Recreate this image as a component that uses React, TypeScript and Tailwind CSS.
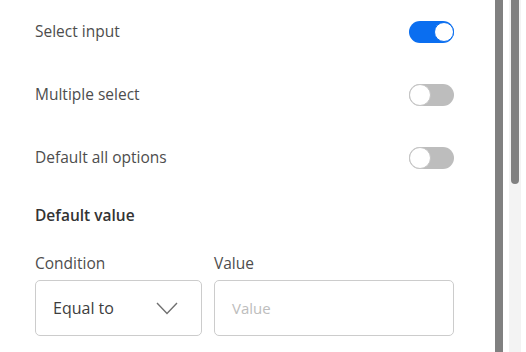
import React from "react";

const Toggle = ({ on }: { on: boolean }) => (
  <div
    className={
      on
        ? "w-[45px] h-[22px] rounded-full bg-[#0a6ef0] flex items-center justify-end px-[2px]"
        : "w-[45px] h-[22px] rounded-full bg-[#bdbdbd] flex items-center justify-start"
    }
  >
    <div
      className={
        on
          ? "w-[20px] h-[20px] rounded-full bg-white border-[1.5px] border-[#0a6ef0] -mr-[2px]"
          : "w-[22px] h-[22px] rounded-full bg-white border-[1.5px] border-[#c4c4c4]"
      }
    />
  </div>
);

const Row = ({ label, on }: { label: string; on: boolean }) => (
  <div className="flex items-center justify-between h-[22px]">
    <span className="text-[15.5px] text-[#4d4d4d]">{label}</span>
    <Toggle on={on} />
  </div>
);

export default function App() {
  return (
    <div
      className="w-[526px] h-[352px] flex bg-white overflow-hidden"
      style={{ fontFamily: '"Open Sans", "Noto Sans", sans-serif' }}
    >
      <div className="w-[495px] pl-[35px] pr-[41px] pt-[21px] flex flex-col">
        <div className="flex flex-col gap-[41px]">
          <Row label="Select input" on={true} />
          <Row label="Multiple select" on={false} />
          <Row label="Default all options" on={false} />
        </div>
        <div className="mt-[35px] text-[15.5px] leading-[22px] font-semibold text-[#333]">Default value</div>
        <div className="mt-[26px] flex gap-[12px]">
          <div className="flex flex-col w-[167px]">
            <span className="text-[15.5px] text-[#4d4d4d] leading-[22px]">Condition</span>
            <div className="mt-[6px] h-[56px] border border-[#cccccc] rounded-[5px] flex items-center justify-between pl-[17px] pr-[23px]">
              <span className="text-[16px] text-[#3d3d3d]">Equal to</span>
              <svg width="22" height="13" viewBox="0 0 22 13" fill="none">
                <path d="M1 1L11 11.5L21 1" stroke="#707070" strokeWidth="1.4" />
              </svg>
            </div>
          </div>
          <div className="flex flex-col flex-1">
            <span className="text-[15.5px] text-[#4d4d4d] leading-[22px]">Value</span>
            <div className="mt-[6px] h-[56px] border border-[#cccccc] rounded-[5px] flex items-center pl-[17px]">
              <span className="text-[15px] text-[#bdbdbd]">Value</span>
            </div>
          </div>
        </div>
      </div>
      <div className="w-[8px] h-full bg-[#808080]" />
      <div className="w-[6px] h-full bg-white" />
      <div className="flex-1 h-full bg-[#f3f3f3] flex flex-col items-center">
        <div className="w-[8px] h-[184px] bg-[#808080] rounded-b-[4px]" />
      </div>
      <div className="w-[5px] h-full bg-white" />
    </div>
  );
}
